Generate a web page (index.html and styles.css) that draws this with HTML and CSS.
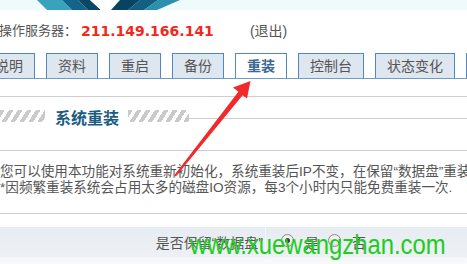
FILE: index.html
```
<!DOCTYPE html>
<html lang="zh-CN">
<head>
<meta charset="utf-8">
<title>系统重装</title>
<link rel="stylesheet" href="styles.css">
</head>
<body>
<div class="page">
  <div class="banner">
    <svg class="logo" width="200" height="10" viewBox="0 0 200 10">
      <polygon points="37,0 62,0 72,10 47,10" fill="#39a3bc"/>
      <polygon points="62,0 78,0 88,10 72,10" fill="#12648a"/>
      <polygon points="78,0 90,0 101,10 88,10" fill="#0a4765"/>
      <polygon points="90,0 120,0 111,10 101,10" fill="#ffffff"/>
      <polygon points="120,0 140,0 128,10 111,10" fill="#08435f"/>
      <polygon points="140,0 158,0 144,10 128,10" fill="#135f82"/>
      <polygon points="158,0 180,0 157,10 144,10" fill="#2b8fae"/>
    </svg>
  </div>

  <div class="server">
    <span class="label">操作服务器：</span><span class="ip">211.149.166.141</span><span class="logout">(退出)</span>
  </div>

  <div class="tabs">
    <div class="tab">说明</div>
    <div class="tab">资料</div>
    <div class="tab">重启</div>
    <div class="tab">备份</div>
    <div class="tab active">重装</div>
    <div class="tab">控制台</div>
    <div class="tab">状态变化</div>
    <div class="tab">网络</div>
  </div>

  <div class="title-block">
    <div class="title-row">
      <div class="stripes stripes-left"></div>
      <h2 class="title">系统重装</h2>
      <div class="stripes stripes-right"></div>
      <div class="title-line"></div>
    </div>
  </div>

  <div class="desc">
    <p class="desc-line">您可以使用本功能对系统重新初始化，系统重装后IP不变，在保留“数据盘”重装系统时数据盘中的数据将被保留。</p>
    <p class="desc-line">*因频繁重装系统会占用太多的磁盘IO资源，每3个小时内只能免费重装一次.</p>
  </div>

  <div class="form-band">
    <div class="form-row">
      <div class="form-label">是否保留“数据盘”</div>
      <div class="form-field">
        <span class="radio checked"></span><span class="radio-text">是</span>
        <span class="radio"></span><span class="radio-text">否</span>
      </div>
    </div>
  </div>

  <svg class="arrow" width="467" height="264" viewBox="0 0 467 264">
    <polygon points="250.5,81 247,98.5 242.6,95.2 175.9,176.6 174.1,175.4 238.4,91.8 233,87.5" fill="#f02a2a"/>
  </svg>

  <div class="watermark">www.xuewangzhan.com</div>
</div>
</body>
</html>
```

FILE: styles.css
```
html, body {
  margin: 0;
  padding: 0;
  background: #ffffff;
}

.page {
  position: relative;
  width: 467px;
  height: 264px;
  overflow: hidden;
  font-family: "Liberation Sans", "Noto Sans CJK SC", sans-serif;
  color: #555555;
}

.banner {
  height: 10px;
  background: #eefafc;
  overflow: hidden;
}

.logo {
  display: block;
}

.server {
  margin-top: 11px;
  height: 20px;
  line-height: 20px;
  font-size: 13px;
  margin-left: -1px;
  white-space: nowrap;
  display: flex;
  align-items: center;
}

.ip {
  margin-left: 4px;
  font-family: "DejaVu Sans", sans-serif;
  font-weight: bold;
  font-size: 14px;
  color: #f3271b;
}

.logout {
  margin-left: 36px;
  font-size: 14px;
}

.tabs {
  margin-top: 12px;
  margin-left: -17px;
  display: flex;
  gap: 11px;
  border-bottom: 1px solid #6f9cc7;
  white-space: nowrap;
}

.tab {
  flex: none;
  height: 24px;
  line-height: 24px;
  padding: 0 11px;
  border: 1px solid #4d89bd;
  border-bottom: none;
  background: #dee6f0;
  font-size: 14px;
  color: #555555;
}

.tab.active {
  background: #ffffff;
  color: #3a6791;
  font-weight: bold;
}

.title-block {
  margin-top: 17px;
  border-top: 1px solid #cfcfcf;
  border-bottom: 1px solid #cfcfcf;
  height: 53px;
}

.title-row {
  display: flex;
  align-items: flex-start;
  padding-top: 13px;
}

.stripes {
  flex: none;
  height: 12px;
  background: repeating-linear-gradient(122deg, #cacaca 0 4px, #ffffff 4px 7.6px);
}

.stripes-left {
  width: 45px;
}

.stripes-right {
  width: 61px;
}

.title {
  margin: 0 9px 0 10px;
  font-size: 16px;
  line-height: 18px;
  font-weight: bold;
  color: #1c5c83;
  white-space: nowrap;
}

.title-line {
  flex: 1;
  height: 1px;
  margin-top: 8px;
  background: #cfcfcf;
}

.desc {
  padding: 13px 0 17px 0;
  border-bottom: 1px solid #cfcfcf;
}

.desc-line {
  margin: 0;
  font-size: 13.6px;
  line-height: 16px;
  white-space: nowrap;
  color: #555555;
}

.form-band {
  margin-top: 13px;
  height: 37px;
  background: linear-gradient(#e7ecf2 0, #edf1f5 30px, #f6f7f9 31px, #f8f9fa 37px);
}

.form-row {
  display: flex;
  height: 30px;
  align-items: stretch;
}

.form-label {
  width: 263px;
  padding-right: 2px;
  border-right: 1px solid #f5f7f9;
  text-align: right;
  font-size: 14px;
  line-height: 32px;
  white-space: nowrap;
  color: #555555;
}

.form-field {
  display: flex;
  align-items: center;
  padding-left: 15px;
  padding-bottom: 3px;
  font-size: 14px;
}

.radio {
  flex: none;
  width: 11px;
  height: 11px;
  border: 1px solid #8e8e8e;
  border-radius: 50%;
  background: radial-gradient(circle at 50% 40%, #ffffff 0, #f0f0f0 40%, #cfcfcf 100%);
  position: relative;
}

.radio.checked::after {
  content: "";
  position: absolute;
  left: 3px;
  top: 3px;
  width: 5px;
  height: 5px;
  border-radius: 50%;
  background: #3d3d3d;
}

.radio-text {
  margin: 0 9px 0 11px;
  line-height: 18px;
  padding-top: 4px;
}

.arrow {
  position: absolute;
  left: 0;
  top: 0;
  pointer-events: none;
}

.watermark {
  position: absolute;
  left: 190px;
  top: 231px;
  font-family: "Liberation Sans", sans-serif;
  font-size: 28px;
  line-height: 28px;
  color: #20cc20;
  white-space: nowrap;
  transform: scaleX(0.851);
  transform-origin: 0 0;
}
```
